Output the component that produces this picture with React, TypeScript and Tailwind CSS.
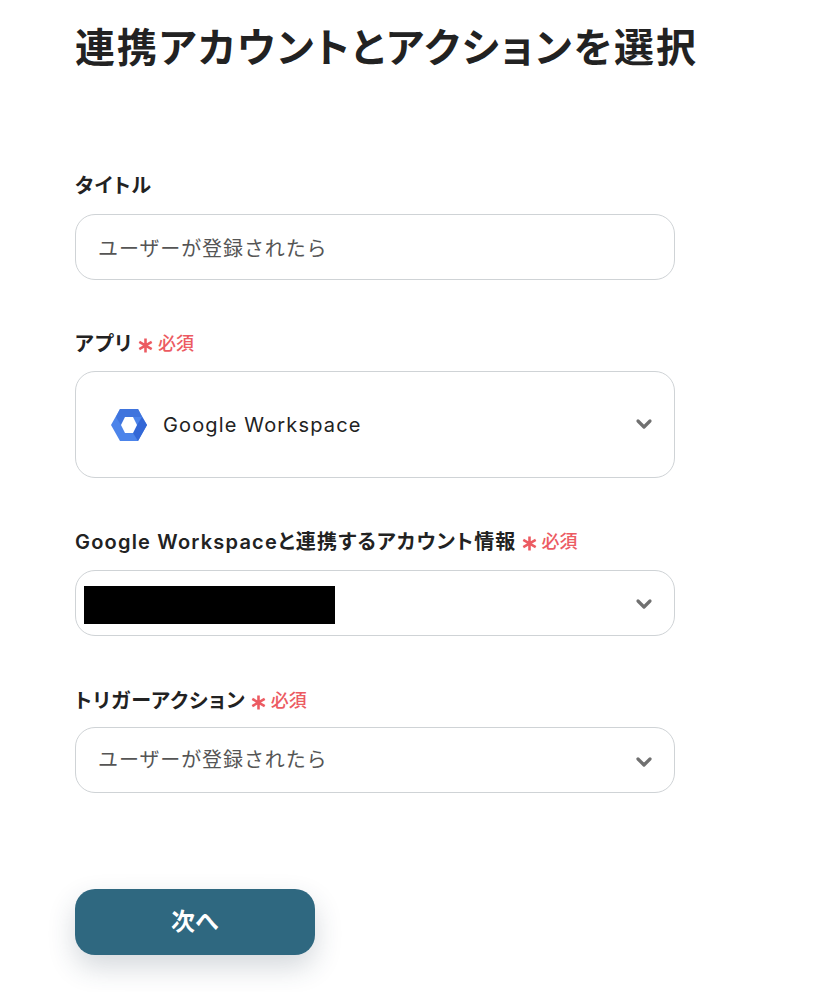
import { ChevronDown } from "lucide-react";

const FONT = "font-['Inter','Noto_Sans_CJK_JP',sans-serif]";

function Required() {
  return (
    <span className="ml-[5px] inline-flex items-center gap-[5px] text-[#ec5b62]">
      <svg width="15" height="15" viewBox="0 0 14 14" className="mt-[3px]">
        <path d="M7 0.5v13M1.2 3.7l11.6 6.6M12.8 3.7L1.2 10.3" stroke="#ec5b62" strokeWidth="2.4" fill="none" />
      </svg>
      <span className="text-[18px] font-medium tracking-[0px]">必須</span>
    </span>
  );
}

function Label({ text, required }: { text: string; required?: boolean }) {
  return (
    <div className="flex h-[26px] items-center pt-[2px] text-[20px] font-semibold leading-[26px] tracking-[1.2px] text-[#222] [font-feature-settings:'palt']">
      {text}
      {required && <Required />}
    </div>
  );
}

export default function App() {
  return (
    <div className={`${FONT} h-[992px] w-[830px] overflow-hidden bg-white pl-[75px]`}>
      <h1 className="pt-[22px] text-[40px] font-semibold leading-[52px] tracking-[2px] text-[#222] [font-feature-settings:'palt']">
        連携アカウントとアクションを選択
      </h1>

      <div className="mt-[98px] w-[600px]">
        <Label text="タイトル" />
        <div className="mt-[16px] flex h-[66px] items-center rounded-[20px] border border-[#cfd3d6] px-[22px] text-[20px] tracking-[0.9px] text-[#555]">
          <span className="pt-[3px]">ユーザーが登録されたら</span>
        </div>

        <div className="mt-[50px]">
          <Label text="アプリ" required />
        </div>
        <div className="relative mt-[15px] flex h-[107px] items-center rounded-[20px] border border-[#cfd3d6] pl-[35px] text-[20px] tracking-[1.15px] text-[#222]">
          <svg width="36" height="32" viewBox="0 0 36 32" className="mr-[16px]">
            <path d="M9 0h18l9 16-9 16H9L0 16z" fill="#4c84ea" />
            <path d="M9 0h18l4 8H14l-4 8-5-8z" fill="#3f74dd" />
            <path d="M31 8l5 8-9 16-5-8 4-8z" fill="#3367d6" />
            <path d="M14 8h8l4 8-4 8h-8l-4-8z" fill="#ffffff" />
          </svg>
          Google Workspace
          <ChevronDown className="absolute right-[18px] top-[40px] h-[24px] w-[24px] text-[#707070]" strokeWidth={3.2} />
        </div>

        <div className="mt-[50px]">
          <Label text="Google Workspaceと連携するアカウント情報" required />
        </div>
        <div className="relative mt-[16px] flex h-[66px] items-center rounded-[20px] border border-[#cfd3d6] pl-[8px]">
          <div className="mt-[4px] h-[38px] w-[251px] bg-black" />
          <ChevronDown className="absolute right-[18px] top-[21px] h-[24px] w-[24px] text-[#707070]" strokeWidth={3.2} />
        </div>

        <div className="mt-[51px]">
          <Label text="トリガーアクション" required />
        </div>
        <div className="relative mt-[14px] flex h-[66px] items-center rounded-[20px] border border-[#cfd3d6] px-[22px] text-[20px] tracking-[0.9px] text-[#555]">
          <span>ユーザーが登録されたら</span>
          <ChevronDown className="absolute right-[18px] top-[22px] h-[24px] w-[24px] text-[#707070]" strokeWidth={3.2} />
        </div>

        <button className="mt-[96px] flex h-[66px] w-[240px] items-center justify-center rounded-[20px] bg-[#2f6880] text-[24px] font-semibold text-white shadow-[0_12px_28px_rgba(40,60,80,0.2)]">
          次へ
        </button>
      </div>
    </div>
  );
}
